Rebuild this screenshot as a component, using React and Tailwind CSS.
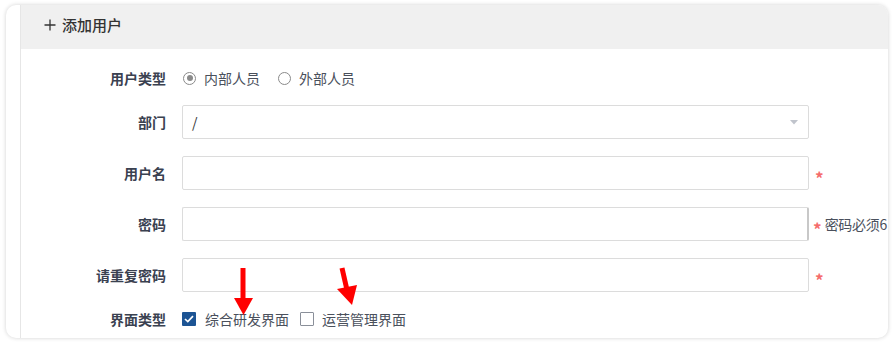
import React from "react";

function Row({ label, children }) {
  return (
    <div className="flex items-center h-[34px]">
      <div className="w-[145px] text-right text-[14px] font-bold text-[#3a4150]">{label}</div>
      <div className="ml-[16px] flex items-center flex-1">{children}</div>
    </div>
  );
}

function Star({ className = "" }) {
  return (
    <span className={"text-[#f56c6c] text-[17px] font-bold leading-none translate-y-[4px] " + className}>*</span>
  );
}

export default function App() {
  return (
    <div className="relative w-[894px] h-[344px] bg-white overflow-hidden" style={{ fontFamily: '"Noto Sans CJK SC", "Noto Sans", sans-serif' }}>
      <div className="absolute left-[6px] top-[5px] w-[882px] h-[333px] rounded-[10px] bg-white shadow-[0_0_4px_rgba(0,0,0,0.18)] overflow-hidden flex">
        <div className="w-[15px] border-r border-[#e6e6e6] shrink-0" />
        <div className="flex-1 flex flex-col">
          {/* Header */}
          <div className="h-[44px] bg-[#f0f0f0] flex items-center pl-[23px] pb-[4px] text-[15px] text-[#333] font-medium">
            <svg width="12" height="12" viewBox="0 0 12 12" className="mr-[6px]">
              <path d="M6 0.5V11.5M0.5 6H11.5" stroke="#333" strokeWidth="1.3" />
            </svg>
            添加用户
          </div>

          {/* Form */}
          <div className="flex flex-col pt-[12px]">
            <Row label="用户类型">
              <span className="w-[13px] h-[13px] rounded-full border border-[#8a8a8a] flex items-center justify-center ml-[1px]">
                <span className="w-[6px] h-[6px] rounded-full bg-[#8a8a8a]" />
              </span>
              <span className="ml-[8px] text-[14px] text-[#4a505c]">内部人员</span>
              <span className="ml-[18px] w-[13px] h-[13px] rounded-full border border-[#8a8a8a]" />
              <span className="ml-[8px] text-[14px] text-[#4a505c]">外部人员</span>
            </Row>

            <div className="mt-[10px]">
              <Row label="部门">
                <div className="w-[627px] h-[34px] border border-[#dcdcdc] rounded-[2px] flex items-center px-[9px] justify-between">
                  <span className="text-[14px] text-[#333]">/</span>
                  <svg width="8" height="5" viewBox="0 0 8 5" className="mr-[1px]">
                    <path d="M0 0H8L4 4.5Z" fill="#c0c4cc" />
                  </svg>
                </div>
              </Row>
            </div>

            <div className="mt-[17px]">
              <Row label="用户名">
                <div className="w-[627px] h-[34px] border border-[#dcdcdc] rounded-[2px]" />
                <Star className="ml-[6px]" />
              </Row>
            </div>

            <div className="mt-[17px]">
              <Row label="密码">
                <div className="w-[627px] h-[34px] border border-[#dcdcdc] border-r-2 border-r-[#c8c8c8] rounded-[2px]" />
                <Star className="ml-[4px]" />
                <span className="ml-[3px] text-[14px] text-[#4a505c] whitespace-nowrap tracking-[-0.3px]">密码必须6</span>
              </Row>
            </div>

            <div className="mt-[17px]">
              <Row label="请重复密码">
                <div className="w-[627px] h-[34px] border border-[#dcdcdc] rounded-[2px]" />
                <Star className="ml-[6px]" />
              </Row>
            </div>

            <div className="mt-[10px]">
              <Row label="界面类型">
                <span className="w-[14px] h-[14px] bg-[#1c5494] rounded-[1px] flex items-center justify-center">
                  <svg width="10" height="8" viewBox="0 0 10 8">
                    <path d="M1 4L3.8 6.6L9 1.2" stroke="#fff" strokeWidth="1.7" fill="none" />
                  </svg>
                </span>
                <span className="ml-[9px] text-[14px] text-[#4a505c]">综合研发界面</span>
                <span className="ml-[11px] w-[14px] h-[14px] border border-[#8a8f99] rounded-[1px]" />
                <span className="ml-[8px] text-[14px] text-[#4a505c]">运营管理界面</span>
              </Row>
            </div>
          </div>
        </div>
      </div>

      {/* red annotation arrows */}
      <svg className="absolute left-0 top-0 pointer-events-none" width="894" height="344">
        <path d="M243 268V300" stroke="#ff0000" strokeWidth="5" />
        <path d="M234 298H253L243.5 315Z" fill="#ff0000" />
        <path d="M342 268L347 290" stroke="#ff0000" strokeWidth="5" />
        <path d="M337 289L357 285L352 305Z" fill="#ff0000" />
      </svg>
    </div>
  );
}
